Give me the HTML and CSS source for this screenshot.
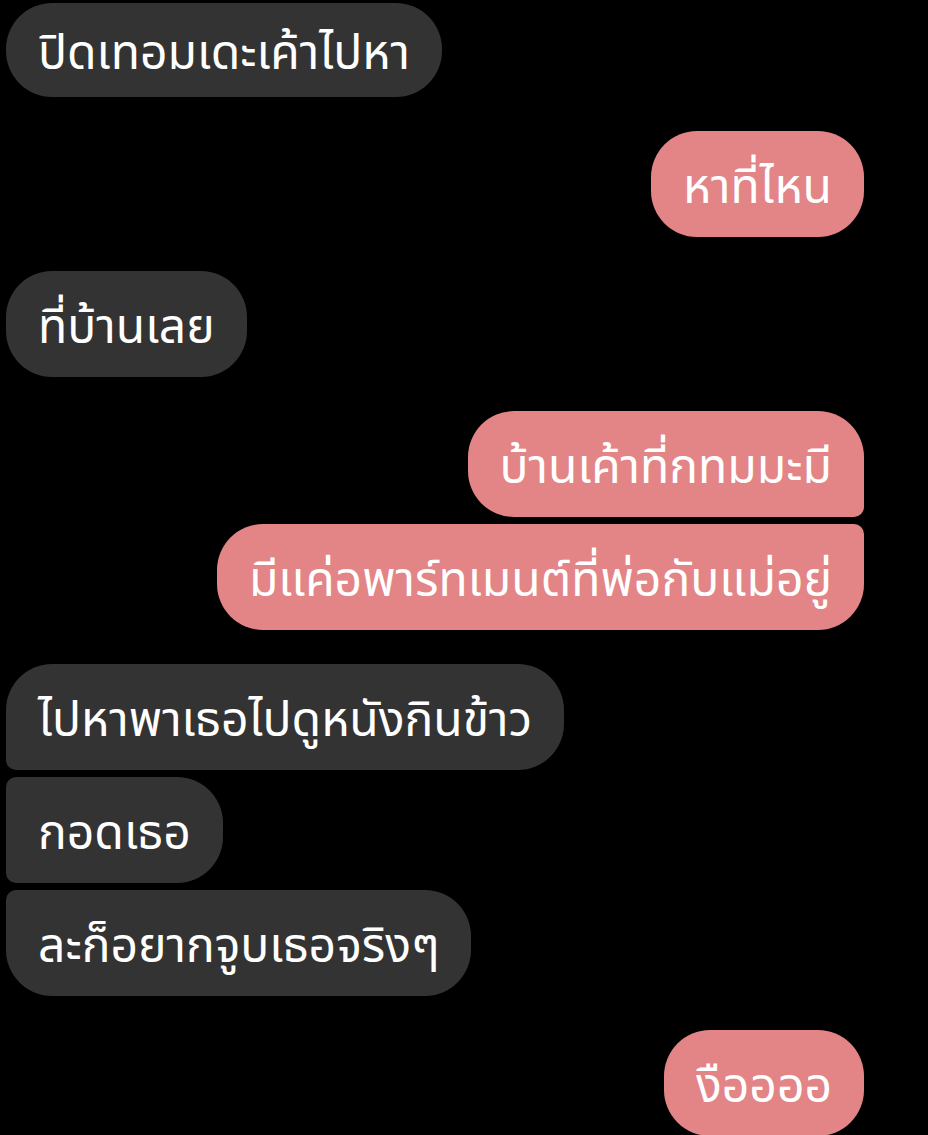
FILE: index.html
```html
<!DOCTYPE html>
<html lang="th">
<head>
    <meta charset="UTF-8">
    <title>แชท</title>
    <link rel="stylesheet" href="styles.css">
</head>
<body>
<div class="chat">
    <div class="msg them first">ปิดเทอมเดะเค้าไปหา</div>

    <div class="msg me gap">หาที่ไหน</div>

    <div class="msg them gap">ที่บ้านเลย</div>

    <div class="msg me gap top">บ้านเค้าที่กทมมะมี</div>
    <div class="msg me bottom">มีแค่อพาร์ทเมนต์ที่พ่อกับแม่อยู่</div>

    <div class="msg them gap top">ไปหาพาเธอไปดูหนังกินข้าว</div>
    <div class="msg them mid">กอดเธอ</div>
    <div class="msg them bottom">ละก็อยากจูบเธอจริงๆ</div>

    <div class="msg me gap">งืออออ</div>
</div>
</body>
</html>
```

FILE: styles.css
```css
* {
    margin: 0;
    padding: 0;
    box-sizing: border-box;
}

html,
body {
    background-color: #000;
    height: 100%;
    overflow: hidden;
}

.chat {
    display: flex;
    flex-direction: column;
    padding: 3px 64px 0 6px;
    font-family: "Noto Sans Thai", "Noto Sans Thai UI", "Noto Sans", sans-serif;
}

.msg {
    display: flex;
    align-items: center;
    height: 106px;
    padding: 8px 32px 0;
    margin-top: 7px;
    border-radius: 46px;
    font-size: 48px;
    color: #fff;
    white-space: nowrap;
}

.msg.gap {
    margin-top: 34px;
}

.msg.first {
    height: 94px;
    margin-top: 0;
}

/* ข้อความของอีกฝั่ง */
.them {
    align-self: flex-start;
    background-color: #333;
}

.them.top {
    border-bottom-left-radius: 10px;
}

.them.mid {
    border-top-left-radius: 10px;
    border-bottom-left-radius: 10px;
}

.them.bottom {
    border-top-left-radius: 10px;
}

/* ข้อความของเรา */
.me {
    align-self: flex-end;
    background-color: #e38486;
}

.me.top {
    border-bottom-right-radius: 10px;
}

.me.bottom {
    border-top-right-radius: 10px;
}
```
